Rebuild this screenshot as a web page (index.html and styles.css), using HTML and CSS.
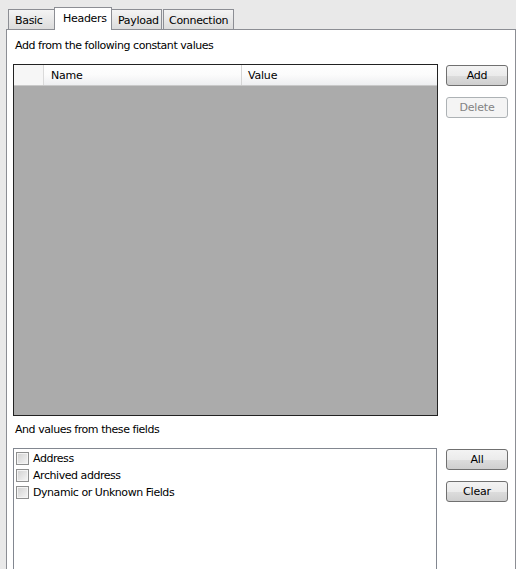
FILE: index.html
```
<!DOCTYPE html>
<html>
<head>
<meta charset="utf-8">
<link rel="stylesheet" href="styles.css">
</head>
<body>
<div class="tabs">
  <div class="tab tab-basic">Basic</div>
  <div class="tab tab-active">Headers</div>
  <div class="tab tab-payload">Payload</div>
  <div class="tab tab-conn">Connection</div>
</div>
<div class="panel">
  <div class="label label-top">Add from the following constant values</div>
  <div class="row">
    <div class="grid">
      <div class="grid-head">
        <div class="gh-sel"></div>
        <div class="gh-name">Name</div>
        <div class="gh-value">Value</div>
      </div>
      <div class="grid-body"></div>
    </div>
    <div class="btns">
      <button class="btn">Add</button>
      <button class="btn btn-disabled">Delete</button>
    </div>
  </div>
  <div class="label label-bottom">And values from these fields</div>
  <div class="row row2">
    <div class="list">
      <div class="item"><span class="cb"></span>Address</div>
      <div class="item"><span class="cb"></span>Archived address</div>
      <div class="item"><span class="cb"></span>Dynamic or Unknown Fields</div>
    </div>
    <div class="btns btns2">
      <button class="btn">All</button>
      <button class="btn">Clear</button>
    </div>
  </div>
</div>
</body>
</html>
```
FILE: styles.css
```
html, body {
  margin: 0;
  padding: 0;
  background: #e9e9e9;
  overflow: hidden;
}
body {
  font-family: "DejaVu Sans", "Liberation Sans", sans-serif;
  font-size: 11px;
  color: #000;
  width: 516px;
  height: 569px;
}
.tabs {
  display: flex;
  align-items: flex-end;
  height: 29px;
  padding-left: 8px;
  position: relative;
  z-index: 2;
}
.tab {
  box-sizing: border-box;
  height: 20px;
  border: 1px solid #8c8e94;
  border-bottom: none;
  background: linear-gradient(#f4f4f4, #dcdcdc);
  padding: 4px 0 0 6px;
  letter-spacing: -0.3px;
}
.tab-basic { width: 46px; border-right: none; }
.tab-active {
  width: 58px;
  background: #fff;
  padding: 4px 0 0 8px;
  margin-bottom: -1px;
  height: 23px;
}
.tab-payload { width: 50px; border-left: none; }
.tab-conn { width: 71px; margin-left: 1px; padding-left: 5px; }
.panel {
  box-sizing: border-box;
  margin-left: 6px;
  width: 510px;
  height: 560px;
  background: #fff;
  border: 1px solid #8c8e94;
  padding: 0 7px 0 6px;
}
.label {
  height: 14px;
  line-height: 14px;
  padding-left: 2px;
  letter-spacing: -0.45px;
}
.label-top { margin-top: 9px; margin-bottom: 11px; }
.label-bottom { margin-top: 7px; margin-bottom: 11px; }
.row {
  display: flex;
  align-items: flex-start;
}
.grid {
  box-sizing: border-box;
  width: 425px;
  height: 352px;
  border: 1px solid #222;
  display: flex;
  flex-direction: column;
}
.grid-head {
  display: flex;
  height: 20px;
  border-bottom: 1px solid #c9c9c9;
  background: linear-gradient(#ffffff 0%, #fbfbfb 50%, #eeeff1 100%);
}
.gh-sel {
  width: 29px;
  border-right: 1px solid #dadada;
  background: #f6f6f6;
}
.gh-name {
  width: 190px;
  padding-left: 7px;
  padding-top: 1px;
  line-height: 20px;
  border-right: 1px solid #d5d5d5;
  letter-spacing: -0.2px;
}
.gh-value {
  padding-left: 6px;
  padding-top: 1px;
  line-height: 20px;
  letter-spacing: -0.2px;
}
.grid-body {
  flex: 1;
  background: #ababab;
}
.btns {
  display: flex;
  flex-direction: column;
  gap: 11px;
  margin-left: 8px;
  margin-top: 1px;
}
.btns2 { margin-left: 9px; }
.btn {
  box-sizing: border-box;
  width: 62px;
  height: 21px;
  font-family: inherit;
  font-size: 11px;
  padding: 0;
  border: 1px solid #707070;
  border-radius: 3px;
  background: linear-gradient(#f3f3f3 0%, #ebebeb 50%, #dddddd 51%, #cfcfcf 100%);
  color: #000;
  letter-spacing: -0.2px;
}
.btn-disabled {
  border-color: #adb2b5;
  background: #f4f4f4;
  color: #838383;
}
.list {
  box-sizing: border-box;
  width: 425px;
  height: 140px;
  border: 1px solid #828790;
  padding-top: 1px;
}
.item {
  display: flex;
  align-items: center;
  height: 17px;
  padding-left: 2px;
  letter-spacing: -0.45px;
}
.cb {
  box-sizing: border-box;
  width: 13px;
  height: 13px;
  border: 1px solid #8e8f8f;
  background: linear-gradient(135deg, #d0d0d0, #f6f6f6);
  box-shadow: inset 0 0 0 1px #f4f4f4;
  margin-right: 4px;
}
```
